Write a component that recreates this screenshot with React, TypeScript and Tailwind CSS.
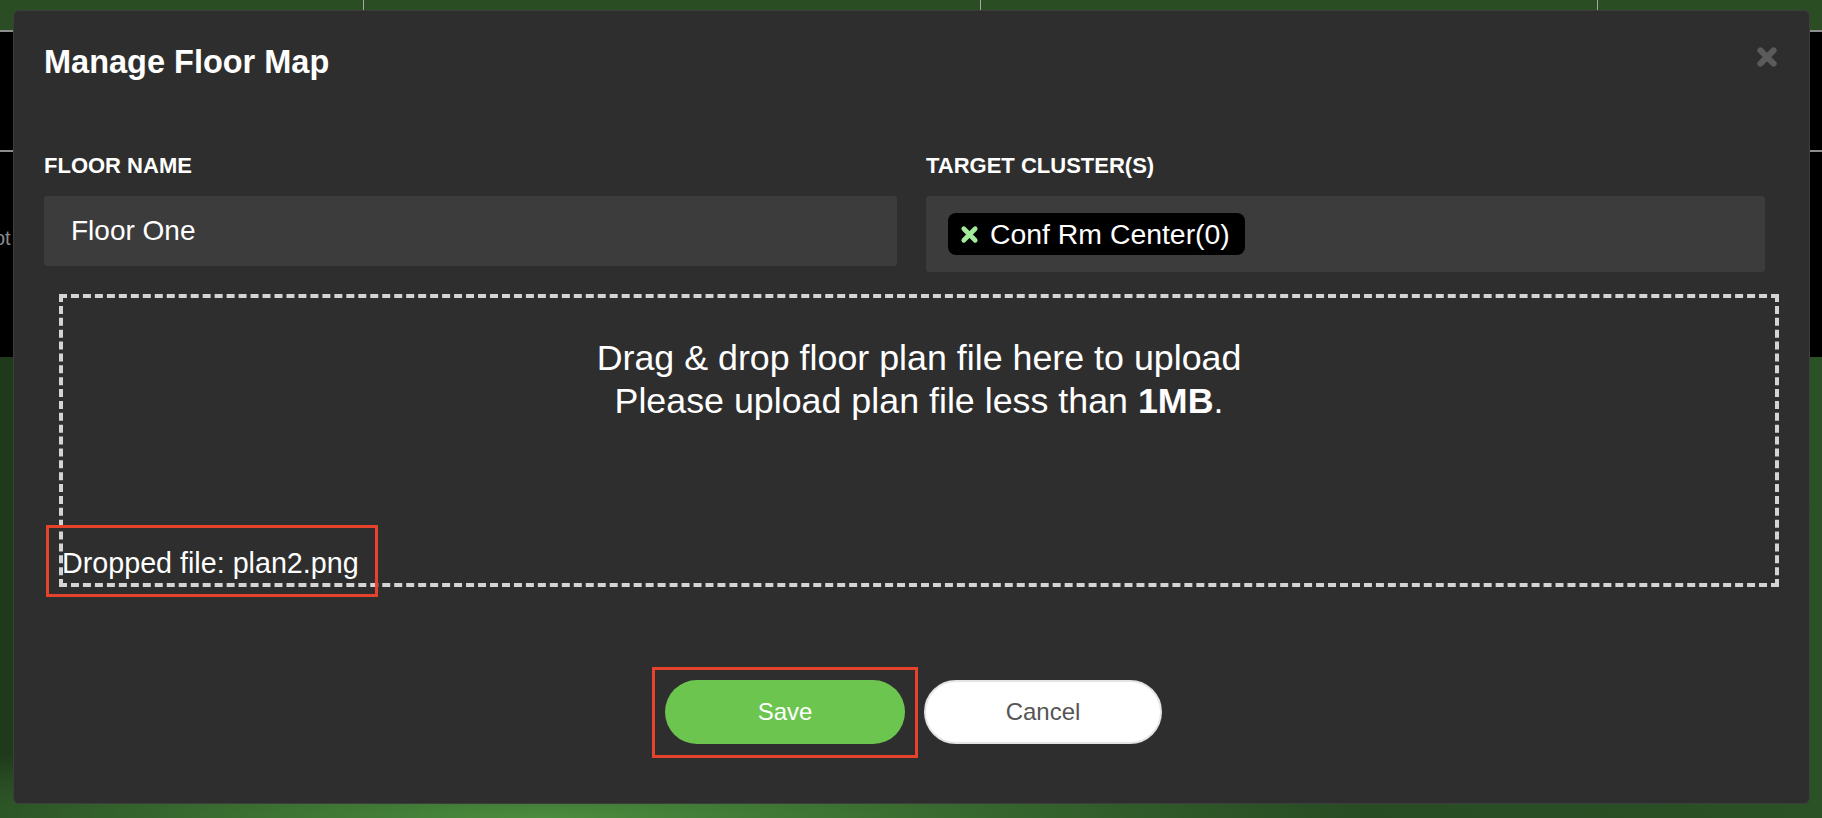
import React from "react";

function HeavyX({ size, color, width }: { size: number; color: string; width: number }) {
  return (
    <svg width={size} height={size} viewBox="0 0 20 20" fill="none">
      <path d="M4 4 L16 16 M16 4 L4 16" stroke={color} strokeWidth={width} strokeLinecap="round" />
    </svg>
  );
}

export default function App() {
  return (
    <div className="relative w-[1822px] h-[818px] overflow-hidden flex flex-col font-['Liberation_Sans',Arial,sans-serif]">
      {/* background page */}
      <div className="h-[30px] flex bg-[#2a4d24] shrink-0">
        <div className="w-[364px] border-r border-[#a8a8a8]" />
        <div className="w-[617px] border-r border-[#a8a8a8]" />
        <div className="w-[617px] border-r border-[#a8a8a8]" />
        <div className="flex-1" />
      </div>
      <div className="h-[2px] bg-[#8d8d8d] shrink-0" />
      <div className="h-[118px] bg-black shrink-0" />
      <div className="h-[2px] bg-[#8d8d8d] shrink-0" />
      <div className="h-[205px] bg-black shrink-0 flex flex-col">
        <div className="mt-[74px] -ml-[6px]">
          <span className="block text-[20px] leading-[24px] text-[#8a8a8a]">ot</span>
        </div>
      </div>
      <div className="flex-1 bg-[radial-gradient(ellipse_45%_18%_at_30%_100%,#4b8d3e,transparent),linear-gradient(to_right,#1e3a1b,#2b5126)]" />

      {/* modal */}
      <div className="absolute left-[13px] top-[10px] w-[1797px] h-[794px] rounded-[6px] border border-[#3d3d3d] bg-[#2e2e2e] flex flex-col">
        <div className="flex items-start justify-between pl-[30px] pr-[31px] pt-[31px]">
          <h2 className="text-[32.5px] leading-[40px] font-bold text-white">Manage Floor Map</h2>
          <div className="mt-[4px]">
            <HeavyX size={22} color="#5b5b5b" width={5.5} />
          </div>
        </div>

        <div className="mt-[71px] flex items-start gap-[29px] pl-[30px]">
          <div className="w-[853px]">
            <div className="text-[22px] leading-[26px] font-bold text-white">FLOOR NAME</div>
            <div className="mt-[17px] h-[70px] rounded-[3px] bg-[#3c3c3c] flex items-center pl-[27px] text-[28px] text-white">
              Floor One
            </div>
          </div>
          <div className="w-[839px]">
            <div className="text-[22px] leading-[26px] font-bold text-white">TARGET CLUSTER(S)</div>
            <div className="mt-[17px] h-[76px] rounded-[3px] bg-[#3c3c3c] flex items-center pl-[22px]">
              <div className="h-[42px] rounded-[8px] bg-black flex items-center pl-[12px] pr-[15px] gap-[11px]">
                <HeavyX size={19} color="#a3ea9a" width={5} />
                <span className="text-[28.4px] leading-[32px] text-white">Conf Rm Center(0)</span>
              </div>
            </div>
          </div>
        </div>

        <div className="ml-[45px] mt-[22px] w-[1720px] h-[293px] border-[4px] border-dashed border-[#d4d4d4] flex flex-col pt-[39px] pb-[4px]">
          <div className="text-center text-[35.8px] leading-[43px] text-white">
            <div>Drag &amp; drop floor plan file here to upload</div>
            <div>
              Please upload plan file less than <span className="font-bold">1MB</span>.
            </div>
          </div>
          <div className="mt-auto text-[28.7px] leading-[32px] text-white -ml-[1px]">Dropped file: plan2.png</div>
        </div>

        <div className="ml-[45px] w-[1720px] mt-[93px] flex justify-center gap-[19px] pr-[11px]">
          <button className="w-[240px] h-[64px] rounded-full bg-[#6cc54e] text-white text-[24px]">Save</button>
          <button className="w-[238px] h-[64px] rounded-full bg-white border-2 border-[#e4e4e4] text-[#555555] text-[24px]">
            Cancel
          </button>
        </div>
      </div>

      {/* annotation boxes */}
      <div className="absolute left-[46px] top-[525px] w-[332px] h-[72px] border-[3px] border-[#e5432b]" />
      <div className="absolute left-[652px] top-[667px] w-[266px] h-[91px] border-[3px] border-[#e5432b]" />
    </div>
  );
}
